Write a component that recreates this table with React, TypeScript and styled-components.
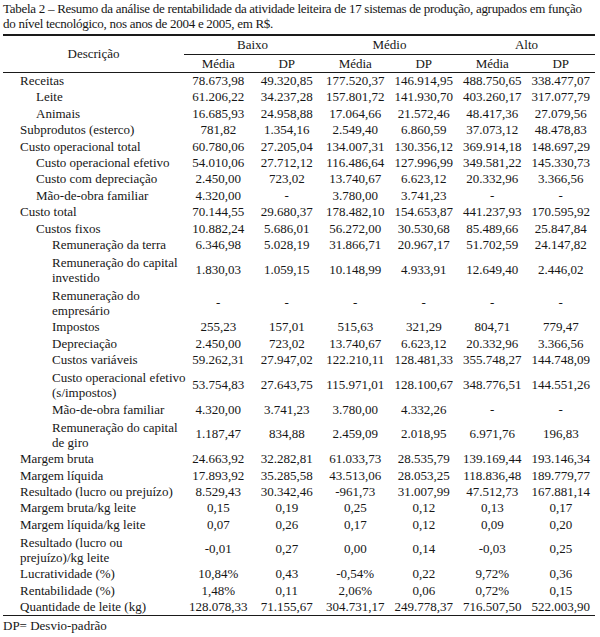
import React from "react";
import styled, { createGlobalStyle } from "styled-components";

const serif = `"Liberation Serif", "Times New Roman", Times, serif`;

const GlobalStyle = createGlobalStyle`
  body {
    margin: 0;
    background: #ffffff;
  }
`;

const Page = styled.div`
  width: 600px;
  padding: 2px 0 0 3px;
  box-sizing: border-box;
  font-family: ${serif};
  color: #161616;
`;

const Caption = styled.div`
  font-family: ${serif};
  font-size: 13px;
  line-height: 14.5px;
  letter-spacing: -0.28px;
  white-space: nowrap;
`;

const Table = styled.table`
  width: 592px;
  margin-top: 3px;
  border-collapse: collapse;
  table-layout: fixed;
  font-family: ${serif};
  font-size: 13px;
  color: #161616;
  border-top: 2px solid #1a1a1a;
  border-bottom: 1.5px solid #1a1a1a;
`;

const HeadCell = styled.th<{ $group?: boolean }>`
  font-weight: normal;
  text-align: center;
  padding: 0;
  height: ${(p) => (p.$group ? "18px" : "17px")};
  line-height: 16px;
  border-bottom: ${(p) =>
    p.$group ? "1px solid #1a1a1a" : "1.5px solid #1a1a1a"};
`;

const Label = styled.td<{ $level: number; $tall?: boolean }>`
  padding: ${(p) => (p.$tall ? "1.5px" : "0")} 0
    ${(p) => (p.$tall ? "1.5px" : "0")} ${(p) => 17 + p.$level * 16}px;
  line-height: ${(p) => (p.$tall ? "15px" : "16.4px")};
  white-space: nowrap;
`;

const Value = styled.td`
  padding: 0;
  text-align: center;
  white-space: nowrap;
  line-height: 16.4px;
`;

const Note = styled.div`
  font-family: ${serif};
  font-size: 13px;
  line-height: 16px;
  margin-top: 2px;
`;

type Row = { label: string[]; level: number; values: string[] };

const rows: Row[] = [
  { label: ["Receitas"], level: 0, values: ["78.673,98", "49.320,85", "177.520,37", "146.914,95", "488.750,65", "338.477,07"] },
  { label: ["Leite"], level: 1, values: ["61.206,22", "34.237,28", "157.801,72", "141.930,70", "403.260,17", "317.077,79"] },
  { label: ["Animais"], level: 1, values: ["16.685,93", "24.958,88", "17.064,66", "21.572,46", "48.417,36", "27.079,56"] },
  { label: ["Subprodutos (esterco)"], level: 0, values: ["781,82", "1.354,16", "2.549,40", "6.860,59", "37.073,12", "48.478,83"] },
  { label: ["Custo operacional total"], level: 0, values: ["60.780,06", "27.205,04", "134.007,31", "130.356,12", "369.914,18", "148.697,29"] },
  { label: ["Custo operacional efetivo"], level: 1, values: ["54.010,06", "27.712,12", "116.486,64", "127.996,99", "349.581,22", "145.330,73"] },
  { label: ["Custo com depreciação"], level: 1, values: ["2.450,00", "723,02", "13.740,67", "6.623,12", "20.332,96", "3.366,56"] },
  { label: ["Mão-de-obra familiar"], level: 1, values: ["4.320,00", "-", "3.780,00", "3.741,23", "-", "-"] },
  { label: ["Custo total"], level: 0, values: ["70.144,55", "29.680,37", "178.482,10", "154.653,87", "441.237,93", "170.595,92"] },
  { label: ["Custos fixos"], level: 1, values: ["10.882,24", "5.686,01", "56.272,00", "30.530,68", "85.489,66", "25.847,84"] },
  { label: ["Remuneração da terra"], level: 2, values: ["6.346,98", "5.028,19", "31.866,71", "20.967,17", "51.702,59", "24.147,82"] },
  { label: ["Remuneração do capital", "investido"], level: 2, values: ["1.830,03", "1.059,15", "10.148,99", "4.933,91", "12.649,40", "2.446,02"] },
  { label: ["Remuneração do", "empresário"], level: 2, values: ["-", "-", "-", "-", "-", "-"] },
  { label: ["Impostos"], level: 2, values: ["255,23", "157,01", "515,63", "321,29", "804,71", "779,47"] },
  { label: ["Depreciação"], level: 2, values: ["2.450,00", "723,02", "13.740,67", "6.623,12", "20.332,96", "3.366,56"] },
  { label: ["Custos variáveis"], level: 2, values: ["59.262,31", "27.947,02", "122.210,11", "128.481,33", "355.748,27", "144.748,09"] },
  { label: ["Custo operacional efetivo", "(s/impostos)"], level: 2, values: ["53.754,83", "27.643,75", "115.971,01", "128.100,67", "348.776,51", "144.551,26"] },
  { label: ["Mão-de-obra familiar"], level: 2, values: ["4.320,00", "3.741,23", "3.780,00", "4.332,26", "-", "-"] },
  { label: ["Remuneração do capital", "de giro"], level: 2, values: ["1.187,47", "834,88", "2.459,09", "2.018,95", "6.971,76", "196,83"] },
  { label: ["Margem bruta"], level: 0, values: ["24.663,92", "32.282,81", "61.033,73", "28.535,79", "139.169,44", "193.146,34"] },
  { label: ["Margem líquida"], level: 0, values: ["17.893,92", "35.285,58", "43.513,06", "28.053,25", "118.836,48", "189.779,77"] },
  { label: ["Resultado (lucro ou prejuízo)"], level: 0, values: ["8.529,43", "30.342,46", "-961,73", "31.007,99", "47.512,73", "167.881,14"] },
  { label: ["Margem bruta/kg leite"], level: 0, values: ["0,15", "0,19", "0,25", "0,12", "0,13", "0,17"] },
  { label: ["Margem líquida/kg leite"], level: 0, values: ["0,07", "0,26", "0,17", "0,12", "0,09", "0,20"] },
  { label: ["Resultado (lucro ou", "prejuízo)/kg leite"], level: 0, values: ["-0,01", "0,27", "0,00", "0,14", "-0,03", "0,25"] },
  { label: ["Lucratividade (%)"], level: 0, values: ["10,84%", "0,43", "-0,54%", "0,22", "9,72%", "0,36"] },
  { label: ["Rentabilidade (%)"], level: 0, values: ["1,48%", "0,11", "2,06%", "0,06", "0,72%", "0,15"] },
  { label: ["Quantidade de leite (kg)"], level: 0, values: ["128.078,33", "71.155,67", "304.731,17", "249.778,37", "716.507,50", "522.003,90"] },
];

const groups = ["Baixo", "Médio", "Alto"];

export default function App() {
  return (
    <Page>
      <GlobalStyle />
      <Caption>
        Tabela 2 – Resumo da análise de rentabilidade da atividade leiteira de 17 sistemas de produção, agrupados em função
        <br />
        do nível tecnológico, nos anos de 2004 e 2005, em R$.
      </Caption>
      <Table>
        <colgroup>
          <col style={{ width: 181 }} />
          {groups.map((g) => (
            <React.Fragment key={g}>
              <col style={{ width: 68.5 }} />
              <col style={{ width: 68.5 }} />
            </React.Fragment>
          ))}
        </colgroup>
        <thead>
          <tr>
            <HeadCell rowSpan={2}>Descrição</HeadCell>
            {groups.map((g) => (
              <HeadCell key={g} colSpan={2} $group>
                {g}
              </HeadCell>
            ))}
          </tr>
          <tr>
            {groups.map((g) => (
              <React.Fragment key={g}>
                <HeadCell>Média</HeadCell>
                <HeadCell>DP</HeadCell>
              </React.Fragment>
            ))}
          </tr>
        </thead>
        <tbody>
          {rows.map((r, i) => (
            <tr key={i}>
              <Label $level={r.level} $tall={r.label.length > 1}>
                {r.label.map((line, j) => (
                  <React.Fragment key={j}>
                    {j > 0 && <br />}
                    {line}
                  </React.Fragment>
                ))}
              </Label>
              {r.values.map((v, j) => (
                <Value key={j}>{v}</Value>
              ))}
            </tr>
          ))}
        </tbody>
      </Table>
      <Note>DP= Desvio-padrão</Note>
    </Page>
  );
}
